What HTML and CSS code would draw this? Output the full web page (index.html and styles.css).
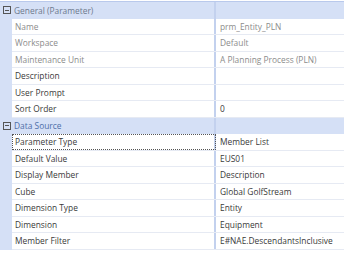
FILE: index.html
```html
<!DOCTYPE html>
<html lang="en">
<head>
  <meta charset="UTF-8" />
  <title>Parameter Properties</title>
  <link rel="stylesheet" href="styles.css">
</head>
<body>

  <div class="grid">
    <div class="cat">
      <span class="toggle"></span>
      <span class="cat-name">General (Parameter)</span>
      <span class="cat-fill"></span>
    </div>
    <div class="prop ro"><span class="key">Name</span><span class="val">prm_Entity_PLN</span></div>
    <div class="prop ro"><span class="key">Workspace</span><span class="val">Default</span></div>
    <div class="prop ro"><span class="key">Maintenance Unit</span><span class="val">A Planning Process (PLN)</span></div>
    <div class="prop"><span class="key">Description</span><span class="val"></span></div>
    <div class="prop"><span class="key">User Prompt</span><span class="val"></span></div>
    <div class="prop"><span class="key">Sort Order</span><span class="val">0</span></div>

    <div class="cat">
      <span class="toggle"></span>
      <span class="cat-name blue">Data Source</span>
      <span class="cat-fill"></span>
    </div>
    <div class="prop focus"><span class="key">Parameter Type</span><span class="val">Member List</span></div>
    <div class="prop"><span class="key">Default Value</span><span class="val">EUS01</span></div>
    <div class="prop"><span class="key">Display Member</span><span class="val">Description</span></div>
    <div class="prop"><span class="key">Cube</span><span class="val">Global GolfStream</span></div>
    <div class="prop"><span class="key">Dimension Type</span><span class="val">Entity</span></div>
    <div class="prop"><span class="key">Dimension</span><span class="val">Equipment</span></div>
    <div class="prop"><span class="key">Member Filter</span><span class="val">E#NAE.DescendantsInclusive</span></div>
  </div>

</body>
</html>
```

FILE: styles.css
```css
body {
  margin: 0;
  padding-top: 1px;
  background: #fff;
  font-family: "Open Sans", "Noto Sans", sans-serif;
  font-size: 8.4px;
  color: #3a3a3a;
}

.grid {
  border-top: 1px solid #b9c9ec;
  background: #d5e0f6;
}

.cat,
.prop {
  display: flex;
  height: 16.5px;
  box-sizing: border-box;
  align-items: center;
}

.cat {
  position: relative;
  background: #d5e0f6;
}

.toggle {
  width: 6px;
  height: 6px;
  margin: 0 0 0 3px;
  border: 1px solid #555;
  position: relative;
  flex: none;
}

.toggle::after {
  content: "";
  position: absolute;
  left: 1px;
  right: 1px;
  top: 2.5px;
  height: 1px;
  background: #555;
}

.cat-name {
  width: 200px;
  padding-left: 3px;
  color: #6e7a8e;
  align-self: stretch;
  display: flex;
  align-items: center;
  border-right: 2px solid #c3d1ee;
}

.cat-name.blue { color: #4e6ea8; }

.cat-fill { flex: 1; }

.prop {
  margin-left: 12px;
  background: #fff;
  border-bottom: 1px solid #e6eaf3;
}

.key {
  width: 199px;
  padding-left: 3px;
  align-self: stretch;
  display: flex;
  align-items: center;
  border-right: 2px solid #c3d1ee;
}

.val {
  flex: 1;
  padding-left: 4px;
}

.ro .key,
.ro .val { color: #8c8c8c; }

.focus .key {
  outline: 1px dotted #555;
  outline-offset: -1px;
}
```
